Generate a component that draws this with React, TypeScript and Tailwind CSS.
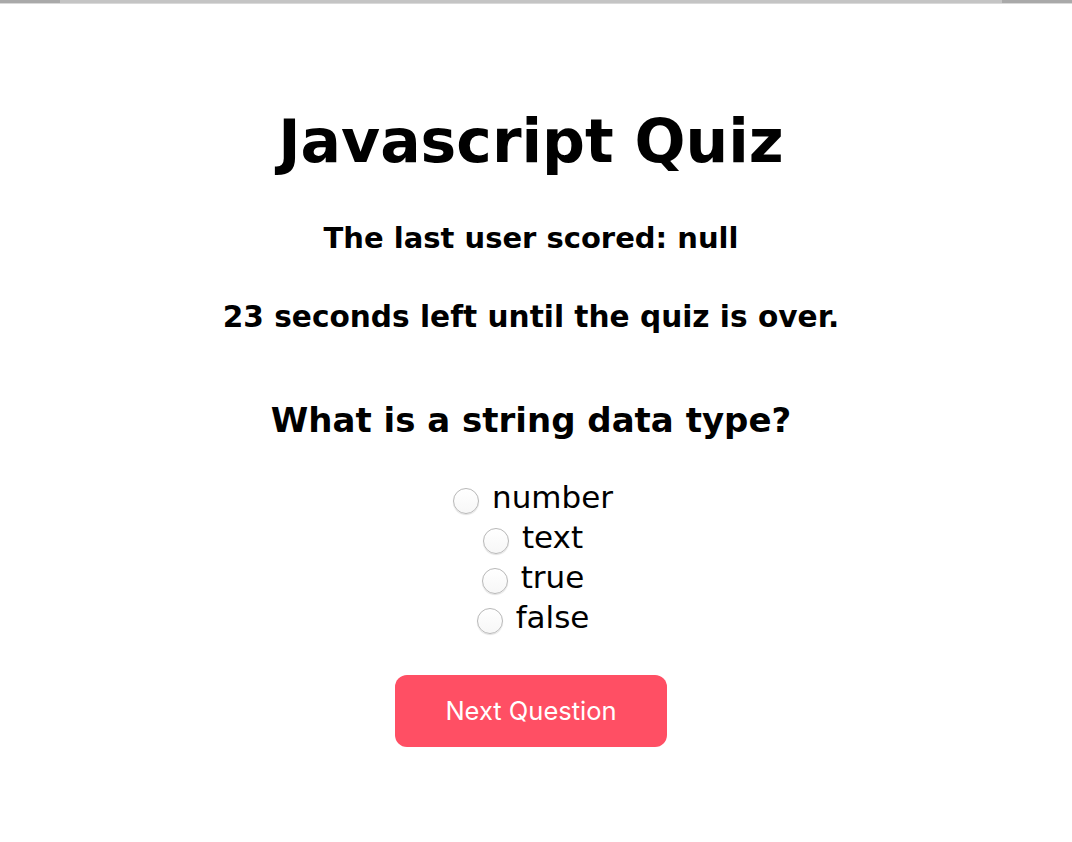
import React from "react";

const options = ["number", "text", "true", "false"];

export default function App() {
  return (
    <div className="min-h-[842px] w-full bg-white" style={{ fontFamily: '"DejaVu Sans", Verdana, sans-serif' }}>
      <div className="flex h-[3px] w-full">
        <div className="w-[60px] bg-[#a9a9a9]" />
        <div className="flex-1 bg-[#c4c4c4]" />
        <div className="w-[70px] bg-[#a9a9a9]" />
      </div>
      <div className="h-px w-full bg-[#d9d9d9]" />
      <div className="flex flex-col items-center pr-[10px] text-black">
        <h1 className="mt-[99px] text-[60px] font-bold leading-[76px]">Javascript Quiz</h1>
        <p className="mt-[44px] text-[29px] font-bold leading-[30px]">The last user scored: null</p>
        <p className="mt-[49px] text-[29.6px] font-bold leading-[30px]">23 seconds left until the quiz is over.</p>
        <h2 className="mt-[68px] text-[34px] font-bold leading-[40px]">What is a string data type?</h2>
        <div className="mt-[37px] flex flex-col items-center pl-[4px]">
          {options.map((o) => (
            <label key={o} className="flex h-[40px] items-center gap-[13px] text-[31px] leading-[40px]">
              <span className="mt-[8px] h-[26px] w-[26px] rounded-full border border-[#b8b8b8] bg-gradient-to-b from-white to-[#f7f7f7] shadow-[0_1px_1px_rgba(0,0,0,0.12)]" />
              <span>{o}</span>
            </label>
          ))}
        </div>
        <button
          className="mt-[38px] h-[72px] w-[272px] rounded-[12px] bg-[#ff4f64] text-[25.5px] text-white"
          style={{ fontFamily: 'Inter, "Liberation Sans", sans-serif' }}
        >
          Next Question
        </button>
      </div>
    </div>
  );
}
